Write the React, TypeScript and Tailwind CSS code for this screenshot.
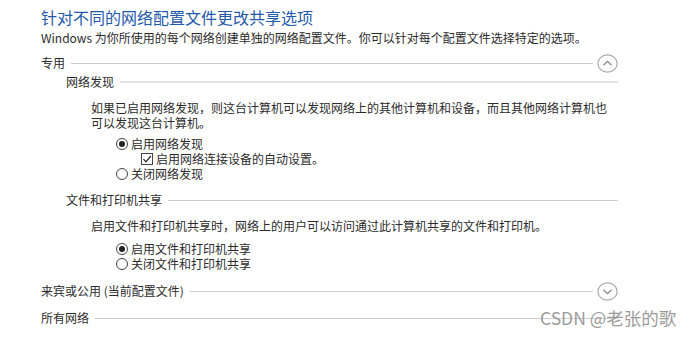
import React from 'react';

const FONT = '"Noto Sans CJK SC", "Noto Sans", sans-serif';

const Chevron: React.FC<{ up?: boolean }> = ({ up }) => (
  <svg width="21" height="19" viewBox="0 0 21 19" className="shrink-0 ml-[4px]">
    <ellipse cx="10.5" cy="9.5" rx="9.6" ry="8.6" fill="none" stroke="#a8a8a8" strokeWidth="1.2" />
    {up ? (
      <path d="M6.5 11.2 L10.5 7.4 L14.5 11.2" fill="none" stroke="#8a8a8a" strokeWidth="1.3" />
    ) : (
      <path d="M6.5 7.8 L10.5 11.6 L14.5 7.8" fill="none" stroke="#8a8a8a" strokeWidth="1.3" />
    )}
  </svg>
);

const Radio: React.FC<{ checked?: boolean; label: string }> = ({ checked, label }) => (
  <div className="flex items-center h-[15px] pl-[75px]">
    <span className="w-[12px] h-[12px] rounded-full border border-[#444] flex items-center justify-center shrink-0">
      {checked && <span className="w-[6px] h-[6px] rounded-full bg-[#222]" />}
    </span>
    <span className="ml-[3px]">{label}</span>
  </div>
);

const Heading: React.FC<{ label: string; indent?: boolean; chevron?: 'up' | 'down'; thick?: boolean; className?: string }> = ({
  label,
  indent,
  chevron,
  thick,
  className = '',
}) => (
  <div className={`flex items-center ${indent ? 'pl-[25px] h-[18px]' : 'h-[20px]'} ${className}`}>
    <span className="whitespace-nowrap">{label}</span>
    <div className={`flex-1 ml-[6px] ${thick ? 'h-[2px] bg-[#e2e2e2]' : 'h-px bg-[#cfcfcf]'}`} />
    {chevron && <Chevron up={chevron === 'up'} />}
  </div>
);

export default function App() {
  return (
    <div className="relative w-[692px] h-[338px] bg-white overflow-hidden text-[#2b2b2b]" style={{ fontFamily: FONT }}>
      <div className="ml-[41px] w-[577px] flex flex-col text-[12px]">
        <h1 className="mt-[6px] h-[22px] leading-[22px] text-[16px] text-[#1f5aac] whitespace-nowrap">
          针对不同的网络配置文件更改共享选项
        </h1>
        <p className="mt-[2px] leading-[16px] whitespace-nowrap">
          Windows 为你所使用的每个网络创建单独的网络配置文件。你可以针对每个配置文件选择特定的选项。
        </p>

        <Heading label="专用" chevron="up" className="mt-[7px]" />
        <Heading label="网络发现" indent thick />

        <p className="mt-[9px] pl-[50px] leading-[15px]">
          如果已启用网络发现，则这台计算机可以发现网络上的其他计算机和设备，而且其他网络计算机也
          <br />
          可以发现这台计算机。
        </p>

        <div className="mt-[6px] flex flex-col">
          <Radio checked label="启用网络发现" />
          <div className="flex items-center h-[15px] pl-[100px]">
            <span className="w-[12px] h-[12px] border border-[#444] flex items-center justify-center shrink-0">
              <svg width="10" height="10" viewBox="0 0 10 10">
                <path d="M1.5 5.2 L4 7.8 L8.8 2" fill="none" stroke="#222" strokeWidth="1.2" />
              </svg>
            </span>
            <span className="ml-[3px]">启用网络连接设备的自动设置。</span>
          </div>
          <Radio label="关闭网络发现" />
        </div>

        <Heading label="文件和打印机共享" indent className="mt-[10px]" />

        <p className="mt-[9px] pl-[50px] leading-[15px] whitespace-nowrap">
          启用文件和打印机共享时，网络上的用户可以访问通过此计算机共享的文件和打印机。
        </p>

        <div className="mt-[8px] flex flex-col">
          <Radio checked label="启用文件和打印机共享" />
          <Radio label="关闭文件和打印机共享" />
        </div>

        <Heading label="来宾或公用 (当前配置文件)" chevron="down" className="mt-[10px]" />
        <Heading label="所有网络" className="mt-[7px]" />
      </div>

      <div className="absolute left-[540px] top-[307px] text-[17.5px] leading-[22px] text-[#9c9c9c] whitespace-nowrap">
        CSDN @老张的歌
      </div>
    </div>
  );
}
